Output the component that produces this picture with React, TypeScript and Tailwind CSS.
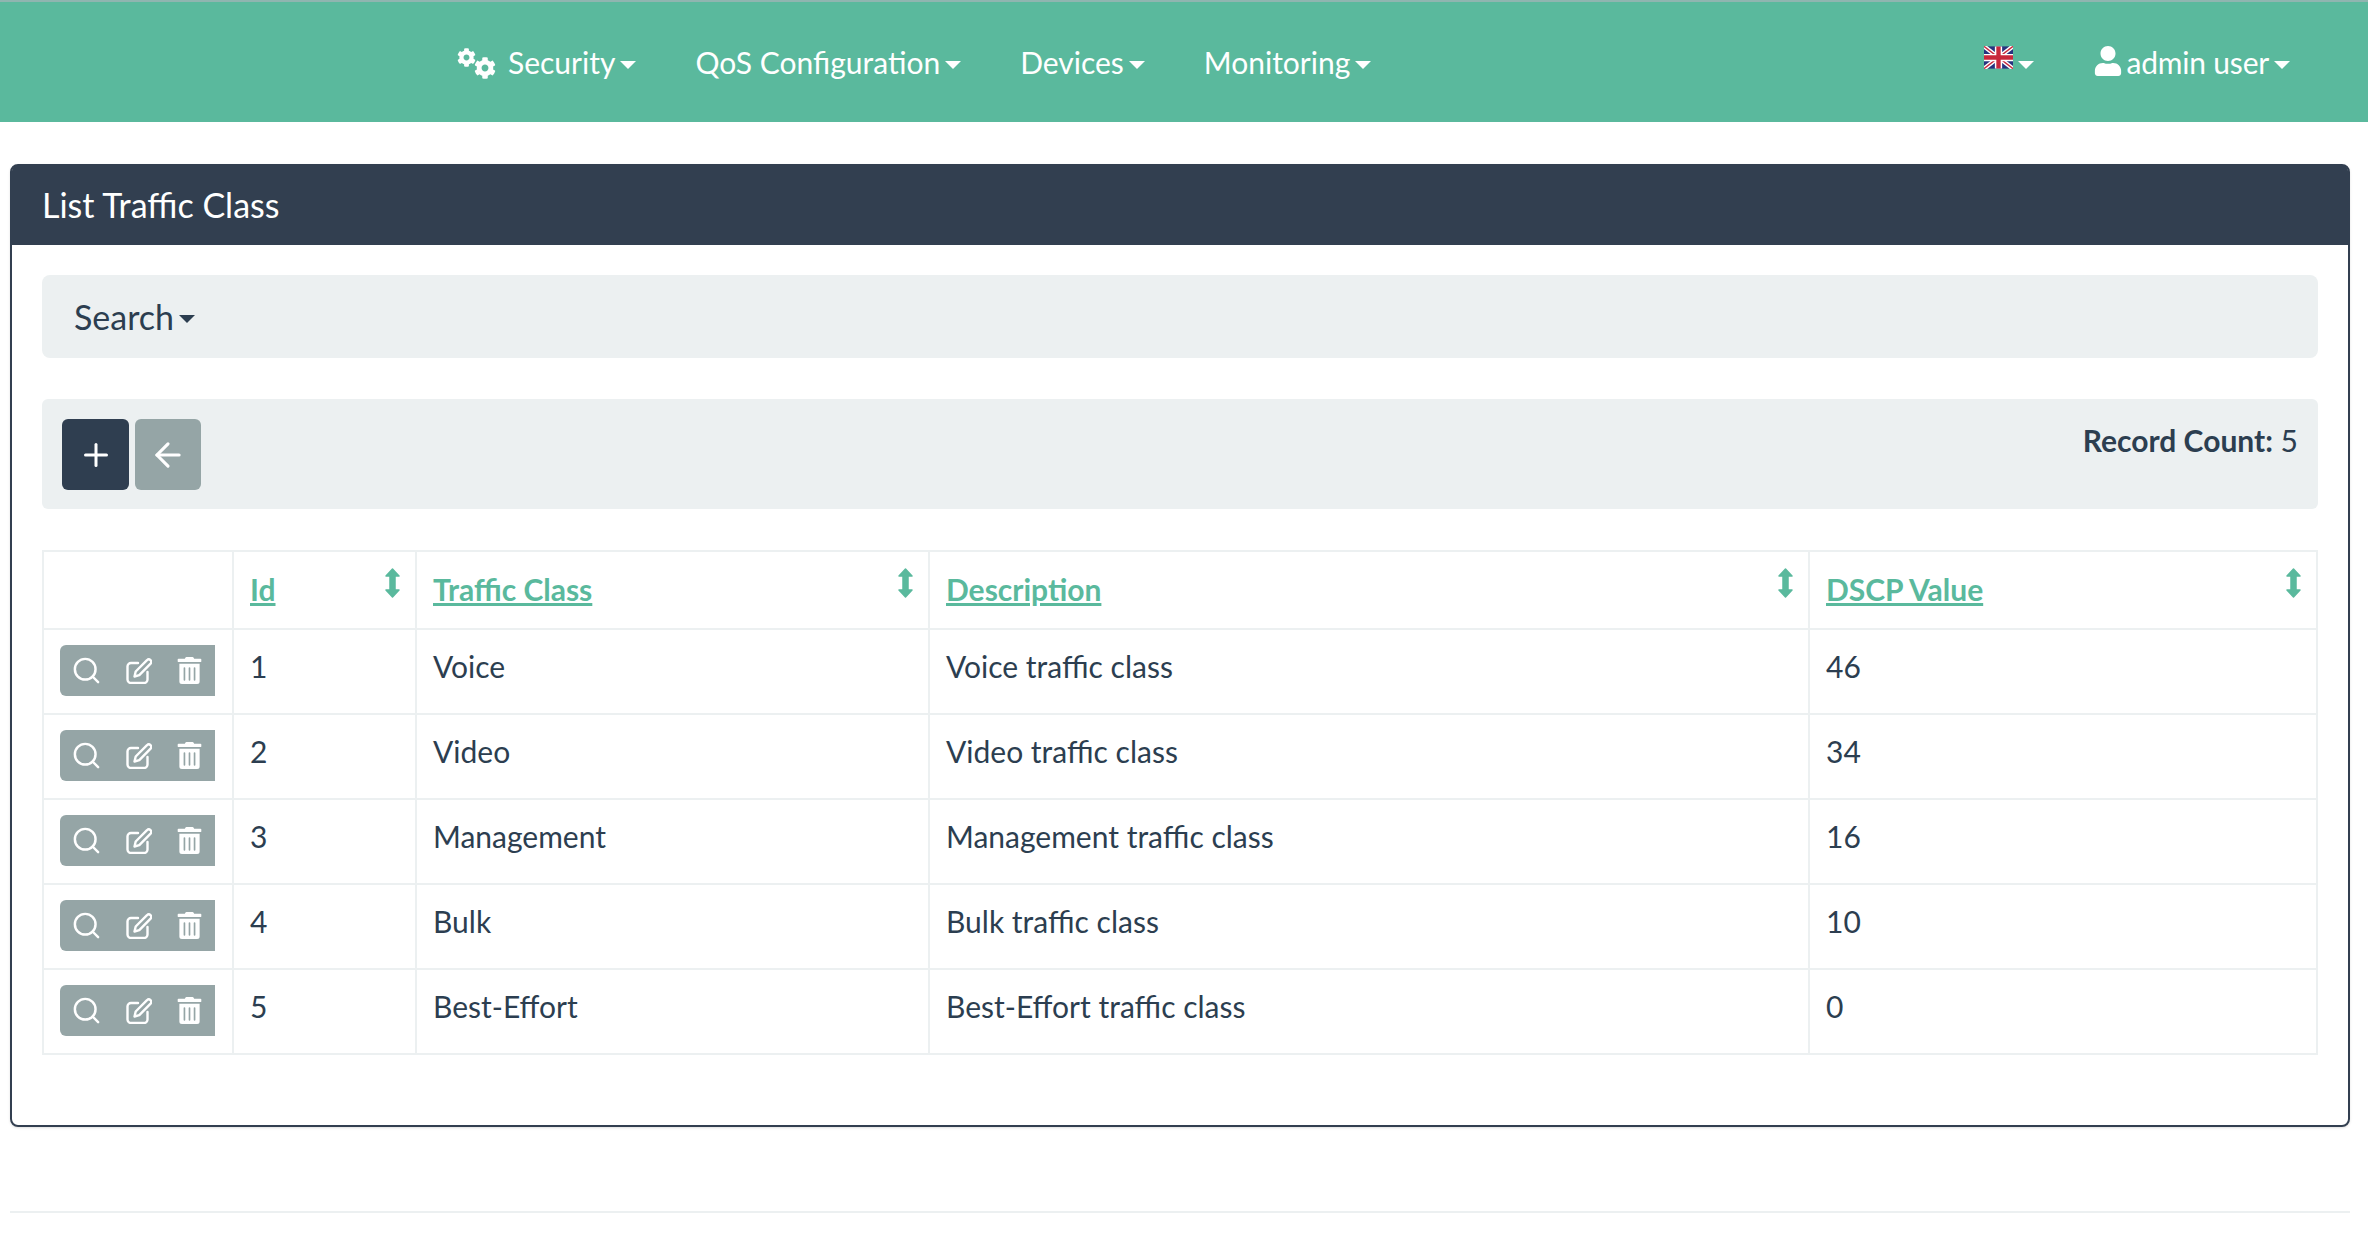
import React from 'react';
import { FaUser, FaCog, FaTrashAlt } from 'react-icons/fa';
import { FiSearch } from 'react-icons/fi';
import { Plus, ArrowLeft } from 'lucide-react';

const rows = [
  { id: 1, name: 'Voice', dscp: 46 },
  { id: 2, name: 'Video', dscp: 34 },
  { id: 3, name: 'Management', dscp: 16 },
  { id: 4, name: 'Bulk', dscp: 10 },
  { id: 5, name: 'Best-Effort', dscp: 0 },
];

const columns = [
  { label: 'Id', width: 'w-[183px]' },
  { label: 'Traffic Class', width: 'w-[513px]' },
  { label: 'Description', width: 'w-[880px]' },
  { label: 'DSCP Value', width: 'w-[508px]' },
];

function Caret({ className = 'border-t-white' }: { className?: string }) {
  return <span className={`inline-block ml-[5px] mt-[5px] border-x-[8px] border-t-[8px] border-x-transparent ${className}`} />;
}

function NavItem({ label, icon }: { label: string; icon?: React.ReactNode }) {
  return (
    <a className="flex items-center text-white text-[30px] pl-[29px] pr-[30px]">
      {icon}
      {label}
      <Caret />
    </a>
  );
}

function Gears() {
  return (
    <span className="flex w-[39px] h-[31px] mr-[12px] mt-[3px] text-white">
      <FaCog className="text-[19px] shrink-0" />
      <FaCog className="text-[22px] shrink-0 self-end -ml-[2px]" />
    </span>
  );
}

function UkFlag() {
  return (
    <svg viewBox="0 0 60 46" className="w-[29px] h-[23px] mb-[9px] blur-[0.7px]">
      <rect width="60" height="46" fill="#27337f" />
      <path d="M0 0L60 46M60 0L0 46" stroke="#fff" strokeWidth="9" />
      <path d="M0 0L60 46M60 0L0 46" stroke="#c8283c" strokeWidth="3" />
      <path d="M30 0V46M0 23H60" stroke="#fff" strokeWidth="15" />
      <path d="M30 0V46M0 23H60" stroke="#c8283c" strokeWidth="9" />
    </svg>
  );
}

function SortIcon() {
  return (
    <svg viewBox="0 0 15 30" className="absolute right-[15px] top-[16px] w-[15px] h-[30px] text-[#5ab99d]">
      <path
        d="M7.5 1 L14 8 H10 V22 H14 L7.5 29 L1 22 H5 V8 H1Z"
        fill="currentColor"
        stroke="currentColor"
        strokeWidth="1.5"
        strokeLinejoin="round"
      />
    </svg>
  );
}

function EditIcon() {
  return (
    <svg viewBox="0 0 26 26" className="w-[26px] h-[26px]" fill="none" stroke="currentColor" strokeWidth="2.4" strokeLinecap="round" strokeLinejoin="round">
      <path d="M12 5H5a3.5 3.5 0 0 0-3.5 3.5v13A3.5 3.5 0 0 0 5 25h13a3.5 3.5 0 0 0 3.5-3.5V14" />
      <path d="M8.5 18.5l1.2-5L21 2.2a2.4 2.4 0 0 1 3.6 3.4L13.3 17.2z" />
    </svg>
  );
}

export default function App() {
  return (
    <div className="min-h-[1242px] bg-white text-[#2c3e50] text-[30px] font-['Lato',sans-serif]">
      <nav className="h-[122px] bg-[#5ab99d] border-t-2 border-[#8fb5b0] flex items-center justify-between pl-[428px] pr-[63px]">
        <div className="flex items-center">
          <NavItem label="Security" icon={<Gears />} />
          <NavItem label="QoS Configuration" />
          <NavItem label="Devices" />
          <NavItem label="Monitoring" />
        </div>
        <div className="flex items-center">
          <a className="flex items-center pr-[29px]">
            <UkFlag />
            <Caret />
          </a>
          <a className="flex items-center text-white text-[30px] tracking-[-0.2px] pl-[30px] pr-[15px]">
            <FaUser className="text-[30px] mr-[4px] mb-[2px]" />
            admin user
            <Caret />
          </a>
        </div>
      </nav>

      <div className="mt-[42px] ml-[10px] mr-[18px] h-[963px] border-2 border-[#323f50] rounded-[8px] shadow-sm">
        <div className="h-[80px] -mt-[1px] pb-[2px] bg-[#323f50] rounded-t-[6px] text-white text-[34px] flex items-center px-[30px]">
          List Traffic Class
        </div>
        <div className="px-[30px] pt-[30px]">
          <div className="h-[83px] bg-[#ecf0f1] rounded-[8px] flex items-center px-[32px] text-[34px]">
            Search
            <Caret className="border-t-[#2c3e50]" />
          </div>
          <div className="h-[110px] mt-[41px] bg-[#ecf0f1] rounded-[6px] flex justify-between pl-[20px] pr-[20px] pt-[20px]">
            <div className="flex gap-[6px]">
              <button className="w-[67px] h-[71px] bg-[#2f3e50] rounded-[6px] flex items-center justify-center text-white">
                <Plus size={36} strokeWidth={2} />
              </button>
              <button className="w-[66px] h-[71px] bg-[#95a5a6] rounded-[6px] flex items-center justify-center text-white">
                <ArrowLeft size={38} strokeWidth={2} />
              </button>
            </div>
            <div className="leading-[42px]">
              <b>Record Count:</b> 5
            </div>
          </div>
          <table className="mt-[41px] w-[2274px] table-fixed border-collapse">
            <thead>
              <tr className="h-[78px]">
                <th className="w-[190px] border-2 border-[#ecf0f1]" />
                {columns.map((c) => (
                  <th key={c.label} className={`${c.width} border-2 border-[#ecf0f1] text-left px-[16px] pb-[2px] relative`}>
                    <a className="text-[#5ab99d] underline font-bold">{c.label}</a>
                    <SortIcon />
                  </th>
                ))}
              </tr>
            </thead>
            <tbody>
              {rows.map((r) => (
                <tr key={r.id} className="h-[85px]">
                  <td className="border-2 border-[#ecf0f1] px-[16px] pb-[2px] align-middle">
                    <div className="w-[155px] h-[51px] bg-[#95a5a6] rounded-l-[6px] flex items-center text-white pl-[11px]">
                      <FiSearch className="text-[31px]" strokeWidth={1.9} />
                      <span className="ml-[24px] flex"><EditIcon /></span>
                      <FaTrashAlt className="text-[27px] ml-[24px]" />
                    </div>
                  </td>
                  <td className="border-2 border-[#ecf0f1] px-[16px] align-top pt-[14px]">{r.id}</td>
                  <td className="border-2 border-[#ecf0f1] px-[16px] align-top pt-[14px]">{r.name}</td>
                  <td className="border-2 border-[#ecf0f1] px-[16px] align-top pt-[14px]">{r.name} traffic class</td>
                  <td className="border-2 border-[#ecf0f1] px-[16px] align-top pt-[14px]">{r.dscp}</td>
                </tr>
              ))}
            </tbody>
          </table>
        </div>
      </div>

      <hr className="mt-[84px] ml-[10px] mr-[18px] border-t-2 border-[#ecf0f1]" />
    </div>
  );
}
